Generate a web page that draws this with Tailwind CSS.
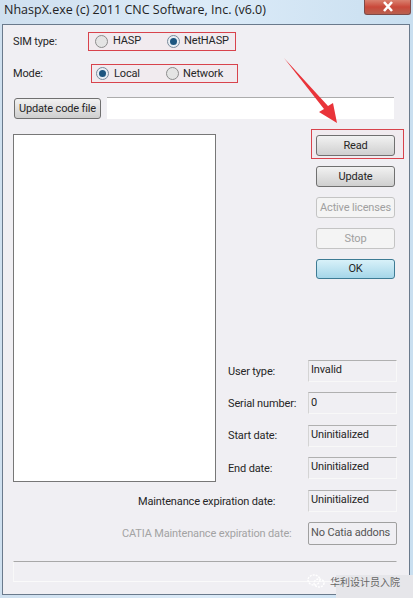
<!DOCTYPE html>
<html lang="en">
  <head>
    <meta charset="UTF-8" />
    <title>NhaspX</title>
    <script src="https://cdn.jsdelivr.net/npm/@tailwindcss/browser@4"></script>
  </head>
  <body class="w-[413px] h-[598px] overflow-hidden">
    <div class="relative flex flex-col w-[413px] h-[598px] bg-gradient-to-r from-[#cfe0ef] via-[#dcebf8] to-[#c9dff0] font-['Roboto',sans-serif] text-[11px] tracking-[-0.15px] whitespace-nowrap text-[#262626]">
      <!-- Title bar -->
      <div class="flex h-[24px] shrink-0 items-start justify-between pl-[4px] pr-[2px]">
        <span class="font-['Open_Sans',sans-serif] text-[12.5px] tracking-normal leading-[20px] text-[#222]">NhaspX.exe (c) 2011 CNC Software, Inc. (v6.0)</span>
        <div class="flex h-[15px] w-[47px] items-center justify-center rounded-b-[3px] border border-t-0 border-[#7d4a48] bg-gradient-to-b from-[#d9806f] via-[#c9483a] to-[#b8604f]">
          <svg width="14" height="12" viewBox="0 0 14 12"><path d="M3 1l8 9M11 1l-8 9" stroke="#fff" stroke-width="2.6" fill="none" /></svg>
        </div>
      </div>

      <!-- Client area -->
      <div class="ml-[2px] mr-[3px] mb-[3px] flex flex-1 flex-col border border-[#6a7a8c] bg-[#f0eff3] pl-[10px] pr-[12px] pt-[7px]">
        <div class="flex h-[19px] items-center">
          <span class="w-[75px] pt-[2px]">SIM type:</span>
          <div class="flex h-[19px] w-[148px] items-center border border-[#d8434c] bg-[#f3e6e8]/40 pl-[6px]">
            <span class="flex h-[13px] w-[13px] rounded-full border border-[#8c8c8c] bg-[#e4e4e4]"></span>
            <span class="ml-[5px] w-[54px]">HASP</span>
            <span class="flex h-[13px] w-[13px] items-center justify-center rounded-full border border-[#7a8a9a] bg-[#e8eef4]"><span class="h-[7px] w-[7px] rounded-full bg-[#1d5680]"></span></span>
            <span class="ml-[4px]">NetHASP</span>
          </div>
        </div>
        <div class="mt-[13px] flex h-[19px] items-center">
          <span class="w-[78px] pt-[2px]">Mode:</span>
          <div class="flex h-[19px] w-[147px] items-center border border-[#d8434c] bg-[#f3e6e8]/40 pl-[4px]">
            <span class="flex h-[13px] w-[13px] items-center justify-center rounded-full border border-[#7a8a9a] bg-[#e8eef4]"><span class="h-[7px] w-[7px] rounded-full bg-[#1d5680]"></span></span>
            <span class="ml-[5px] w-[52px] pt-[1px]">Local</span>
            <span class="flex h-[13px] w-[13px] rounded-full border border-[#8c8c8c] bg-[#e4e4e4]"></span>
            <span class="ml-[4px] pt-[1px]">Network</span>
          </div>
        </div>
        <div class="mt-[14px] flex h-[22px] items-center">
          <button class="ml-[1px] h-[21px] w-[87px] shrink-0 rounded-[3px] border border-[#707070] bg-gradient-to-b from-[#f2f2f2] to-[#cfcfcf] pt-[2px]">Update code file</button>
          <div class="ml-[6px] h-[22px] w-[287px] border-t border-[#acacac] bg-white"></div>
        </div>

        <div class="mt-[15px] flex h-[348px]">
          <div class="w-[203px] shrink-0 border border-[#777] bg-white"></div>
          <div class="flex min-w-0 flex-1 flex-col">
            <div class="-mt-[5px] ml-[95px] flex flex-col items-start">
              <div class="flex h-[30px] w-[93px] border border-[#d8434c] bg-[#f3e6e8]/40 pl-[4px] pt-[5px]">
                <button class="h-[21px] w-[79px] rounded-[3px] border border-[#707070] bg-gradient-to-b from-[#f2f2f2] to-[#cfcfcf] pt-[1px]">Read</button>
              </div>
              <button class="ml-[5px] mt-[7px] h-[21px] w-[79px] rounded-[3px] border border-[#707070] bg-gradient-to-b from-[#f2f2f2] to-[#cfcfcf] pt-[2px]">Update</button>
              <button class="ml-[5px] mt-[10px] h-[21px] w-[79px] rounded-[3px] border border-[#c4c4c4] bg-[#f4f4f4] pt-[2px] text-[#a0a0a0]">Active licenses</button>
              <button class="ml-[5px] mt-[10px] h-[21px] w-[79px] rounded-[3px] border border-[#c4c4c4] bg-[#f4f4f4] pt-[2px] text-[#a0a0a0]">Stop</button>
              <button class="ml-[5px] mt-[10px] h-[20px] w-[79px] rounded-[3px] border border-[#3d7b94] bg-gradient-to-b from-[#d8f1f9] to-[#a5d6e9] pt-[1px]">OK</button>
            </div>
            <div class="mt-auto mb-[3px] flex flex-col gap-[10.33px] pl-[12px]">
              <div class="flex h-[22px] items-center"><span class="w-[80px] pt-[2px]">User type:</span><span class="flex h-[22px] w-[89px] items-center border border-t-[#b0b0b0] border-l-[#d4d4d4] border-r-[#f8f8f8] border-b-[#f8f8f8] pb-[1px] pl-[2px]">Invalid</span></div>
              <div class="flex h-[22px] items-center"><span class="w-[80px] pt-[2px]">Serial number:</span><span class="flex h-[22px] w-[89px] items-center border border-t-[#b0b0b0] border-l-[#d4d4d4] border-r-[#f8f8f8] border-b-[#f8f8f8] pb-[1px] pl-[2px]">0</span></div>
              <div class="flex h-[22px] items-center"><span class="w-[80px] pt-[2px]">Start date:</span><span class="flex h-[22px] w-[89px] items-center border border-t-[#b0b0b0] border-l-[#d4d4d4] border-r-[#f8f8f8] border-b-[#f8f8f8] pb-[1px] pl-[2px]">Uninitialized</span></div>
              <div class="flex h-[22px] items-center"><span class="w-[80px] pt-[2px]">End date:</span><span class="flex h-[22px] w-[89px] items-center border border-t-[#b0b0b0] border-l-[#d4d4d4] border-r-[#f8f8f8] border-b-[#f8f8f8] pb-[1px] pl-[2px]">Uninitialized</span></div>
            </div>
          </div>
        </div>

        <div class="mt-[8px] flex h-[22px] items-center pl-[125px]">
          <span class="pt-[2px]">Maintenance expiration date:</span>
          <span class="ml-auto flex h-[22px] w-[89px] items-center border border-t-[#b0b0b0] border-l-[#d4d4d4] border-r-[#f8f8f8] border-b-[#f8f8f8] pb-[1px] pl-[2px]">Uninitialized</span>
        </div>
        <div class="mt-[10px] flex h-[23px] items-center pl-[109px]">
          <span class="pt-[2px] text-[#a3a3a3]">CATIA Maintenance expiration date:</span>
          <span class="ml-auto flex h-[23px] w-[89px] items-center rounded-[2px] border border-[#a0a0a0] pb-[1px] pl-[2px] text-[#555]">No Catia addons</span>
        </div>
        <div class="mt-[16px] h-[21px] border border-t-[#a8a8a8] border-l-[#f8f8f8] border-r-[#f0eff3] border-b-[#fafafa]"></div>
      </div>

      <!-- Annotation arrow -->
      <svg class="absolute left-[280px] top-[54px]" width="62" height="74" viewBox="0 0 62 74">
        <path d="M4 4L44 55L39 58L57 69L53 49L48 52Z" fill="#e9343a" />
      </svg>

      <!-- Watermark -->
      <div class="absolute bottom-0 right-0 h-[23px] w-[77px] bg-[#e6e6ea]"></div>
      <div class="absolute bottom-[7px] right-0 flex h-[20px] w-[107px] items-center">
        <svg width="20" height="16" viewBox="0 0 20 16" fill="none" stroke="#fff" stroke-width="1.4" stroke-dasharray="2 1"><ellipse cx="8" cy="7" rx="6" ry="5" /><ellipse cx="13" cy="10" rx="5" ry="4" /></svg>
        <span class="ml-[4px] font-['Noto_Sans_CJK_SC',sans-serif] text-[10px] tracking-normal text-[#666]">华利设计员入院</span>
      </div>
    </div>
  </body>
</html>
